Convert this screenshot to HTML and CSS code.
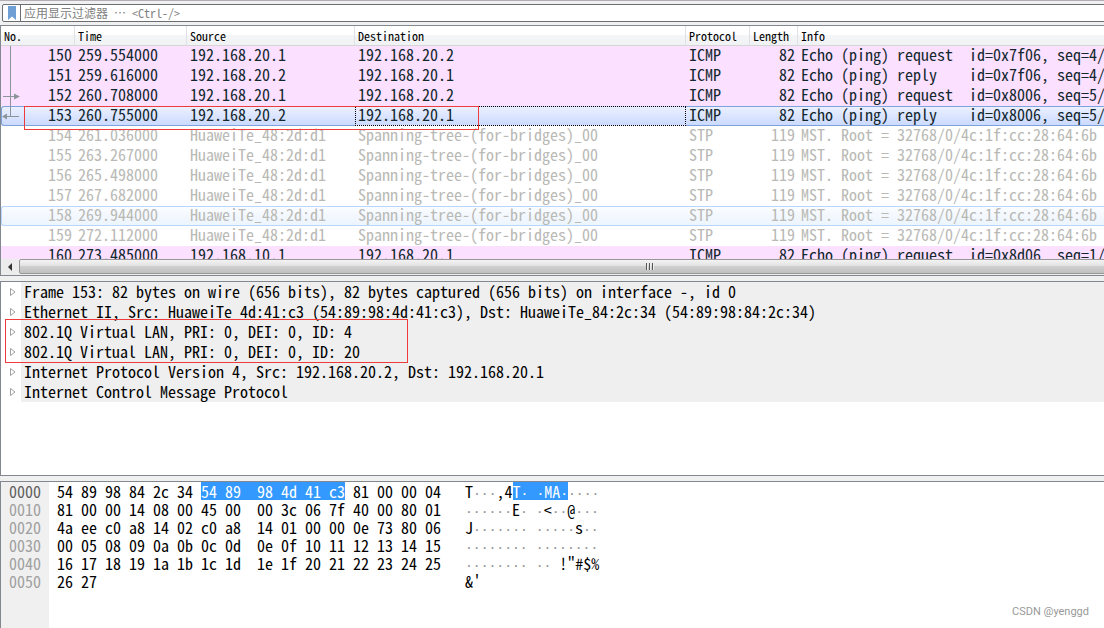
FILE: index.html
```html
<!DOCTYPE html>
<html lang="zh-CN">
<head>
<meta charset="utf-8">
<title>Packet capture</title>
<link rel="stylesheet" href="styles.css">
</head>
<body>
<header class="filter-bar">
  <form class="filter">
    <button class="bookmark" type="button" aria-label="Bookmarks">
      <svg width="8" height="14" viewBox="0 0 8 14"><path d="M0 0H8V14L4 10.5L0 14Z" fill="#6f9fd4"/></svg>
    </button>
    <input class="filter-input" type="text" aria-label="应用显示过滤器" placeholder="应用显示过滤器 … &lt;Ctrl-/&gt;">
  </form>
</header>
<main class="panes">
  <section class="pane packet-list">
    <div class="rows">
      <table class="packets">
        <colgroup>
          <col class="c-no"><col class="c-time"><col class="c-src"><col class="c-dst"><col class="c-proto"><col class="c-len"><col>
        </colgroup>
        <thead>
          <tr><th>No.</th><th>Time</th><th>Source</th><th>Destination</th><th>Protocol</th><th>Length</th><th>Info</th></tr>
        </thead>
        <tbody>
          <tr class="icmp"><td class="num">150</td><td>259.554000</td><td>192.168.20.1</td><td>192.168.20.2</td><td>ICMP</td><td class="num">82</td><td>Echo (ping) request  id=0x7f06, seq=4/</td></tr>
          <tr class="icmp"><td class="num">151</td><td>259.616000</td><td>192.168.20.2</td><td>192.168.20.1</td><td>ICMP</td><td class="num">82</td><td>Echo (ping) reply    id=0x7f06, seq=4/</td></tr>
          <tr class="icmp"><td class="num">152</td><td>260.708000</td><td>192.168.20.1</td><td>192.168.20.2</td><td>ICMP</td><td class="num">82</td><td>Echo (ping) request  id=0x8006, seq=5/</td></tr>
          <tr class="selected"><td class="num">153</td><td>260.755000</td><td>192.168.20.2</td><td class="focus">192.168.20.1</td><td>ICMP</td><td class="num">82</td><td>Echo (ping) reply    id=0x8006, seq=5/</td></tr>
          <tr class="stp"><td class="num">154</td><td>261.036000</td><td>HuaweiTe_48:2d:d1</td><td>Spanning-tree-(for-bridges)_00</td><td>STP</td><td class="num">119</td><td>MST. Root = 32768/0/4c:1f:cc:28:64:6b</td></tr>
          <tr class="stp"><td class="num">155</td><td>263.267000</td><td>HuaweiTe_48:2d:d1</td><td>Spanning-tree-(for-bridges)_00</td><td>STP</td><td class="num">119</td><td>MST. Root = 32768/0/4c:1f:cc:28:64:6b</td></tr>
          <tr class="stp"><td class="num">156</td><td>265.498000</td><td>HuaweiTe_48:2d:d1</td><td>Spanning-tree-(for-bridges)_00</td><td>STP</td><td class="num">119</td><td>MST. Root = 32768/0/4c:1f:cc:28:64:6b</td></tr>
          <tr class="stp"><td class="num">157</td><td>267.682000</td><td>HuaweiTe_48:2d:d1</td><td>Spanning-tree-(for-bridges)_00</td><td>STP</td><td class="num">119</td><td>MST. Root = 32768/0/4c:1f:cc:28:64:6b</td></tr>
          <tr class="stp hover"><td class="num">158</td><td>269.944000</td><td>HuaweiTe_48:2d:d1</td><td>Spanning-tree-(for-bridges)_00</td><td>STP</td><td class="num">119</td><td>MST. Root = 32768/0/4c:1f:cc:28:64:6b</td></tr>
          <tr class="stp"><td class="num">159</td><td>272.112000</td><td>HuaweiTe_48:2d:d1</td><td>Spanning-tree-(for-bridges)_00</td><td>STP</td><td class="num">119</td><td>MST. Root = 32768/0/4c:1f:cc:28:64:6b</td></tr>
          <tr class="icmp"><td class="num">160</td><td>273.485000</td><td>192.168.10.1</td><td>192.168.20.1</td><td>ICMP</td><td class="num">82</td><td>Echo (ping) request  id=0x8d06, seq=1/</td></tr>
        </tbody>
      </table>
      <svg class="related" width="20" height="76" viewBox="0 0 20 76" fill="none" stroke="#8c9599">
        <path d="M9.500 0V70.500M2 50.500H14M4 70.500H18"/>
        <path d="M13 47.500L19 50.500L13 53.500ZM6 67.500L1 70.500L6 73.500Z" fill="#8c9599" stroke="none"/>
      </svg>
      <div class="mark mark-packet"></div>
    </div>
    <div class="scrollbar">
      <button class="scroll-left" type="button" aria-label="Scroll left">
        <svg width="4" height="8" viewBox="0 0 4 8"><path d="M4 0V8L0 4Z" fill="#333"/></svg>
      </button>
      <div class="thumb"><svg width="9" height="7" viewBox="0 0 9 7"><path d="M1.500 0V7M4.500 0V7M7.500 0V7" stroke="#555"/><path d="M2.500 0V7M5.500 0V7M8.500 0V7" stroke="#eee"/></svg></div>
    </div>
  </section>
  <section class="pane details">
    <ul class="tree">
      <li><button type="button"><svg class="twist" width="6" height="8" viewBox="0 0 6 8"><path d="M.5 .5L5 4L.5 7.500Z"/></svg><span>Frame 153: 82 bytes on wire (656 bits), 82 bytes captured (656 bits) on interface -, id 0</span></button></li>
      <li><button type="button"><svg class="twist" width="6" height="8" viewBox="0 0 6 8"><path d="M.5 .5L5 4L.5 7.500Z"/></svg><span>Ethernet II, Src: HuaweiTe 4d:41:c3 (54:89:98:4d:41:c3), Dst: HuaweiTe_84:2c:34 (54:89:98:84:2c:34)</span></button></li>
      <li><button type="button"><svg class="twist" width="6" height="8" viewBox="0 0 6 8"><path d="M.5 .5L5 4L.5 7.500Z"/></svg><span>802.1Q Virtual LAN, PRI: 0, DEI: 0, ID: 4</span></button></li>
      <li><button type="button"><svg class="twist" width="6" height="8" viewBox="0 0 6 8"><path d="M.5 .5L5 4L.5 7.500Z"/></svg><span>802.1Q Virtual LAN, PRI: 0, DEI: 0, ID: 20</span></button></li>
      <li><button type="button"><svg class="twist" width="6" height="8" viewBox="0 0 6 8"><path d="M.5 .5L5 4L.5 7.500Z"/></svg><span>Internet Protocol Version 4, Src: 192.168.20.2, Dst: 192.168.20.1</span></button></li>
      <li><button type="button"><svg class="twist" width="6" height="8" viewBox="0 0 6 8"><path d="M.5 .5L5 4L.5 7.500Z"/></svg><span>Internet Control Message Protocol</span></button></li>
    </ul>
    <div class="mark mark-vlan"></div>
  </section>
  <section class="pane bytes">
    <pre class="offsets"><b>0000</b>
0010
0020
0030
0040
0050</pre>
    <pre class="hex">54 89 98 84 2c 34 <mark>54 89  98 4d 41 c3</mark> 81 00 00 04
81 00 00 14 08 00 45 00  00 3c 06 7f 40 00 80 01
4a ee c0 a8 14 02 c0 a8  14 01 00 00 0e 73 80 06
00 05 08 09 0a 0b 0c 0d  0e 0f 10 11 12 13 14 15
16 17 18 19 1a 1b 1c 1d  1e 1f 20 21 22 23 24 25
26 27</pre>
    <pre class="ascii">T<i>···</i>,4<mark>T<i>·</i> <i>·</i>MA<i>·</i></mark><i>····</i>
<i>······</i>E<i>·</i> <i>·</i>&lt;<i>··</i>@<i>···</i>
J<i>·······</i> <i>·····</i>s<i>··</i>
<i>········</i> <i>········</i>
<i>········</i> <i>··</i> !"#$%
&amp;'</pre>
    <div class="watermark">CSDN @yenggd</div>
  </section>
</main>
</body>
</html>
```
FILE: styles.css
```css
* { box-sizing: border-box; }
body {
  margin: 0;
  height: 100vh;
  display: flex;
  flex-direction: column;
  overflow: hidden;
  background: #f0f0f0;
  color: #000;
  font: 16px/20px "Noto Sans Mono CJK SC", "DejaVu Sans Mono", monospace;
}
button { margin: 0; padding: 0; border: 0; background: none; font: inherit; color: inherit; text-align: left; }
svg { display: block; flex: none; }
pre { margin: 0; font: inherit; }

.filter-bar { flex: none; height: 25px; padding: 3px 0 3px 2px; border-top: 1px solid #b5adb5; overflow: hidden; }
.filter {
  display: flex;
  height: 18px;
  margin-right: -4px;
  border: 1px solid #6b6f73;
  border-radius: 2px;
  background: #fff;
}
.bookmark { display: flex; align-items: center; justify-content: center; width: 18px; border-right: 1px solid #6b6f73; }
.filter-input {
  flex: 1;
  min-width: 0;
  border: 0;
  padding: 0 3px;
  background: none;
  outline: 0;
  font: 12px/16px "Noto Sans Mono CJK SC", "Noto Sans CJK SC", sans-serif;
}
.filter-input::placeholder { color: #808080; opacity: 1; }

.panes { flex: 1; min-height: 0; display: flex; flex-direction: column; gap: 5px; }
.pane {
  position: relative;
  min-height: 0;
  background: #fff;
  border: 1px solid #828790;
  border-right: 0;
  overflow: hidden;
}
.packet-list { flex: 251 0 0; display: flex; flex-direction: column; }
.details { flex: 195 0 0; }
.bytes { flex: 147 0 0; display: flex; border-bottom: 0; line-height: 18px; }

.rows { position: relative; flex: 1; min-height: 0; overflow: hidden; }
.packets { width: 100%; table-layout: fixed; border-collapse: separate; border-spacing: 0; }
.c-no { width: 74px; }
.c-time { width: 112px; }
.c-src { width: 168px; }
.c-dst { width: 331px; }
.c-proto { width: 64px; }
.c-len { width: 48px; }
th {
  height: 20px;
  padding: 0 3px;
  text-align: left;
  font-weight: 400;
  font-size: 12px;
  line-height: 18px;
  background: linear-gradient(#fff 50%, #f4f5f6 50%, #f1f2f4);
  border-right: 1px solid #dfe1e4;
  border-bottom: 1px solid #d5d5d5;
}
th:last-child { border-right: 0; }
td {
  height: 20px;
  padding: 0 3px 4px;
  line-height: 14px;
  vertical-align: top;
  white-space: pre;
  color: #12272e;
  border: 0 solid transparent;
  border-width: 1px 0;
}
.num { text-align: right; }
.icmp td { background: #fce0ff; border-color: #fce0ff; }
.stp td { color: #b9b9b5; }
.selected td { background: linear-gradient(#ebf0ff, #cbdaff); border-color: #7da2dc; }
.hover td { background: linear-gradient(#fafcff, #ecf4fd); border-color: #b8d6fb; }
.selected td:first-child, .hover td:first-child { border-left-width: 1px; border-radius: 3px 0 0 3px; }
.selected .focus { border: 1px dotted #000; padding: 0 2px 4px; }
.related { position: absolute; left: 0; top: 20px; }
.mark { position: absolute; border: 1px solid #ee3b3b; pointer-events: none; }
.mark-packet { left: 23px; top: 80px; width: 455px; height: 24px; }
.mark-vlan { left: 4px; top: 37px; width: 403px; height: 44px; }

.scrollbar { flex: none; display: flex; height: 16px; background: #ececec; overflow: hidden; }
.scroll-left { display: flex; align-items: center; justify-content: center; width: 18px; }
.thumb {
  flex: 1;
  display: flex;
  align-items: center;
  justify-content: center;
  margin-right: -175px;
  height: 15px;
  border: 1px solid #979797;
  border-radius: 2px;
  background: linear-gradient(#f3f3f3, #e2e2e2 45%, #cfcfcf 50%, #c0c0c0);
}

.tree { list-style: none; margin: 0; padding: 0; }
.tree button { display: flex; align-items: center; gap: 5px; width: 100%; height: 20px; padding-left: 9px; }
.tree span { flex: 1; padding: 0 0 2px 3px; line-height: 18px; background: #efefef; white-space: pre; }
.twist { fill: #fff; stroke: #a0a0a0; }

.offsets { width: 48px; padding-left: 8px; background: #f0f0f0; color: #a0a0a0; }
.offsets b { font-weight: 400; color: #606060; }
.hex { padding-left: 8px; width: 416px; }
.bytes i { font-style: normal; font-family: "DejaVu Sans Mono", monospace; font-size: 13px; line-height: 0; color: #8f9499; }
.bytes mark { background: #3399ff; color: #fff; display: inline-block; height: 18px; vertical-align: top; }
.bytes mark i { color: #fff; }
.watermark { position: absolute; right: 15px; bottom: 7px; font: 11px/18px Roboto, sans-serif; color: #999; }
```
